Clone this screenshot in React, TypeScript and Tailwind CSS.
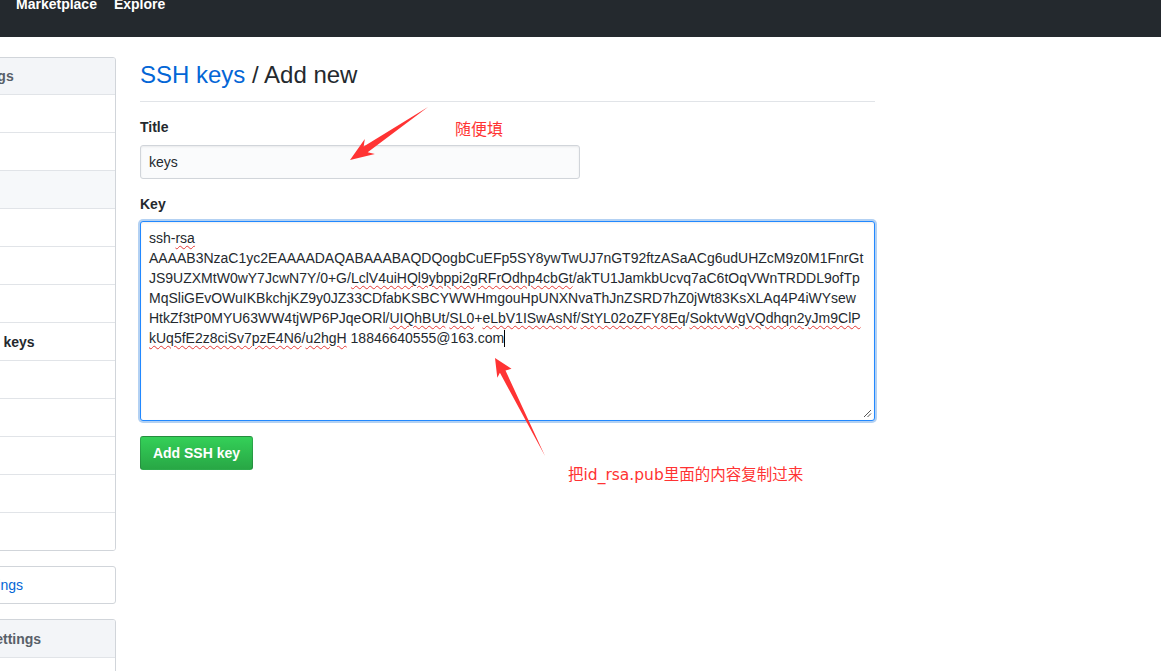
const SANS = "font-['Liberation_Sans',Arial,sans-serif]"

type Seg = [string, boolean]

const keyLines: Seg[][] = [
  [['ssh-', false], ['rsa', true]],
  [['AAAAB3NzaC1yc2EAAAADAQABAAABAQDQogbCuEFp5SY8ywTwUJ7nGT92ftzASaACg6udUHZcM9z0M1FnrGt', false]],
  [
    ['JS9UZXMtW0wY7JcwN7Y/0+G/', false],
    ['LclV4uiHQl9ybppi2gRFrOdhp4cbGt', true],
    ['/akTU1JamkbUcvq7aC6tOqVWnTRDDL9ofTp', false],
  ],
  [['MqSliGEvOWuIKBkchjKZ9y0JZ33CDfabKSBCYWWHmgouHpUNXNvaThJnZSRD7hZ0jWt83KsXLAq4P4iWYsew', false]],
  [
    ['HtkZf3tP0MYU63WW4tjWP6PJqeORl/', false],
    ['UIQhBUt', true],
    ['/', false],
    ['SL0', true],
    ['+', false],
    ['eLbV1ISwAsNf', true],
    ['/', false],
    ['StYL02oZFY8Eq', true],
    ['/', false],
    ['SoktvWgVQdhqn2yJm9ClP', true],
  ],
  [
    ['kUq5fE2z8ciSv7pzE4N6', true],
    ['/', false],
    ['u2hgH', true],
    [' 18846640555@163.com', false],
  ],
]

const personal = [
  'Profile',
  'Account',
  'Emails',
  'Notifications',
  'Billing',
  'Sessions',
  'SSH and GPG keys',
  'Security',
  'Blocked users',
  'Repositories',
  'Organizations',
  'Saved replies',
]

function Sidebar() {
  return (
    <nav className="w-[226px] -ml-[110px] shrink-0 flex flex-col gap-[15px]">
      <div className="border border-[#d1d5da] rounded-[3px] overflow-hidden">
        <div className="h-[36px] bg-[#f3f5f8] pl-[6px] flex items-center text-sm font-bold text-[#586069] whitespace-nowrap">
          Personal settings
        </div>
        {personal.map((item, i) => {
          const selected = item === 'SSH and GPG keys'
          return (
            <a
              key={item}
              className={`h-[38px] border-t border-[#e1e4e8] pl-4 flex items-center text-sm whitespace-nowrap ${
                i === 2 ? 'bg-[#f6f8fa]' : 'bg-white'
              } ${selected ? 'font-bold text-[#24292e]' : 'text-[#586069]'}`}
            >
              {item}
            </a>
          )
        })}
      </div>

      <div className="border border-[#d1d5da] rounded-[3px]">
        <a className="h-[36px] pl-4 flex items-center text-sm text-[#0366d6] whitespace-nowrap">
          Developer settings
        </a>
      </div>

      <div className="border border-[#d1d5da] rounded-[3px] overflow-hidden">
        <div className="h-[37px] bg-[#f3f5f8] pl-[7px] flex items-center text-sm font-bold text-[#586069] whitespace-nowrap">
          Organization settings
        </div>
        <a className="h-[38px] border-t border-[#e1e4e8] pl-4 flex items-center text-sm text-[#586069]">
          org
        </a>
      </div>
    </nav>
  )
}

function KeyField() {
  return (
    <div className="relative h-[200px] border border-[#2188ff] rounded-[3px] bg-white px-[8px] pt-[6px] text-sm leading-5 text-[#24292e] shadow-[inset_0_1px_2px_rgba(27,31,35,0.075),0_0_0_2px_rgba(3,102,214,0.3)]">
      {keyLines.map((line, i) => (
        <div key={i} className="whitespace-nowrap">
          {line.map(([text, wrong], j) =>
            wrong ? (
              <span
                key={j}
                className="underline decoration-wavy decoration-[#e53935] decoration-1 underline-offset-2"
              >
                {text}
              </span>
            ) : (
              <span key={j}>{text}</span>
            )
          )}
          {i === keyLines.length - 1 && (
            <span className="inline-block w-px h-[17px] bg-black align-middle -mt-[2px]" />
          )}
        </div>
      ))}
      {/* resize grip */}
      <svg className="absolute right-[2px] bottom-[2px] w-[9px] h-[9px]" viewBox="0 0 9 9">
        <path d="M1 8 L8 1 M4.5 8 L8 4.5" stroke="#555" strokeWidth="1" />
      </svg>
    </div>
  )
}

export default function App() {
  return (
    <div className={`relative h-[671px] overflow-hidden bg-white ${SANS}`}>
      <header className="h-[37px] bg-[#24292e] flex items-start">
        <ul className="flex gap-[17px] pl-[16px] -mt-[6px] text-sm leading-[21px] font-bold text-white">
          <li>Marketplace</li>
          <li>Explore</li>
        </ul>
      </header>

      <div className="flex gap-6 pt-5">
        <Sidebar />

        <main className="w-[735px] shrink-0">
          <div className="pb-2 border-b border-[#e1e4e8]">
            <h2 className="text-2xl leading-9 font-normal text-[#24292e]">
              <a className="text-[#0366d6]">SSH keys</a> / Add new
            </h2>
          </div>

          <form className="pt-[15px]">
            <label className="block text-sm leading-[21px] font-bold text-[#24292e] mb-[7px]">Title</label>
            <div className="w-[440px] h-[34px] border border-[#d1d5da] rounded-[3px] bg-[#fafbfc] px-[8px] flex items-center text-sm text-[#24292e] shadow-[inset_0_1px_2px_rgba(27,31,35,0.075)]">
              keys
            </div>

            <label className="block mt-[15px] text-sm leading-[21px] font-bold text-[#24292e] mb-[6px]">Key</label>
            <KeyField />

            <button
              type="button"
              className="mt-[15px] h-[34px] w-[113px] rounded-[3px] border border-[rgba(27,31,35,0.2)] bg-linear-to-b from-[#34d058] to-[#28a745] text-sm font-bold text-white"
            >
              Add SSH key
            </button>
          </form>
        </main>
      </div>

      {/* screenshot annotations */}
      <svg className="absolute inset-0 w-[1161px] h-[671px] pointer-events-none" viewBox="0 0 1161 671">
        <polygon
          fill="#f33"
          points="350,160 374.9,153.9 367.7,152.2 428,107 363.7,146.4 364.8,139.1"
        />
        <polygon
          fill="#f33"
          points="495,358 511.5,368.8 505.5,370.5 545,456 499.9,372.8 497.3,377.8"
        />
      </svg>
      <span className="absolute left-[455px] top-[120px] text-base leading-none text-[#f33] font-['Noto_Sans_CJK_SC',sans-serif]">
        随便填
      </span>
      <span className="absolute left-[568px] top-[468px] text-[15.5px] leading-none text-[#f33] font-['DejaVu_Sans','Noto_Sans_CJK_SC',sans-serif] whitespace-nowrap">
        把id_rsa.pub里面的内容复制过来
      </span>
    </div>
  )
}
